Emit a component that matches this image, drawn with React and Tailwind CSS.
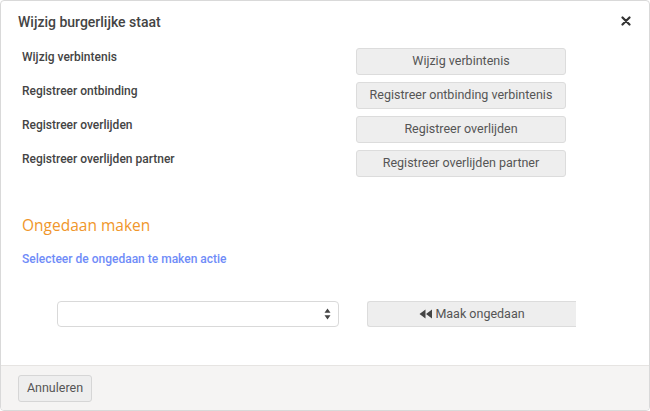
import React from "react";

const rows = [
  ["Wijzig verbintenis", "Wijzig verbintenis"],
  ["Registreer ontbinding", "Registreer ontbinding verbintenis"],
  ["Registreer overlijden", "Registreer overlijden"],
  ["Registreer overlijden partner", "Registreer overlijden partner"],
];

export default function App() {
  return (
    <div className="w-[650px] h-[411px] bg-white" style={{ fontFamily: "Roboto, 'Liberation Sans', sans-serif" }}>
      <div className="w-[650px] h-[411px] border border-[#d9d9d9] rounded-[4px] flex flex-col overflow-hidden">
        <div className="flex-1 flex flex-col">
          <div className="flex items-center justify-between pl-[17px] pr-[18px] h-[43px]">
            <div className="text-[14px] text-[#444] font-medium">Wijzig burgerlijke staat</div>
            <svg width="10" height="10" viewBox="0 0 10 10" className="mt-[-4px]">
              <path d="M1.5 1.5 L8.5 8.5 M8.5 1.5 L1.5 8.5" stroke="#333" strokeWidth="2.2" strokeLinecap="round" />
            </svg>
          </div>
          <div className="flex flex-col gap-[7px] mt-[4px]">
            {rows.map(([l, b]) => (
              <div key={l} className="flex items-start h-[27px]">
                <div className="w-[355px] pl-[21px] text-[12px] font-medium text-[#444] leading-[14px] pt-[2px]">{l}</div>
                <button className="w-[210px] h-[27px] bg-[#eeeeee] border border-[#dcdcdc] rounded-[3px] text-[12.5px] text-[#555] leading-none">
                  {b}
                </button>
              </div>
            ))}
          </div>
          <div className="pl-[21px] mt-[39px] text-[15.5px] text-[#f0962a] leading-[18px]" style={{ fontFamily: "'Open Sans', sans-serif" }}>
            Ongedaan maken
          </div>
          <div className="pl-[21px] mt-[18px] text-[12px] font-medium text-[#6f8cf8] leading-[14px]">
            Selecteer de ongedaan te maken actie
          </div>
          <div className="flex items-center mt-[35px] pl-[56px]">
            <div className="w-[282px] h-[26px] border border-[#d9d9d9] rounded-[4px] flex items-center justify-end pr-[7px]">
              <svg width="7" height="12" viewBox="0 0 7 12">
                <path d="M3.5 0.5 L6.5 4.8 H0.5 Z M3.5 11.5 L6.5 7.2 H0.5 Z" fill="#444" />
              </svg>
            </div>
            <button className="ml-[28px] w-[209px] h-[26px] bg-[#eeeeee] border border-[#dcdcdc] border-r-0 rounded-l-[3px] text-[12.5px] text-[#555] flex items-center justify-center gap-[2px]">
              <svg width="14" height="10" viewBox="0 0 14 10">
                <path d="M6.5 0.5 L0.5 5 L6.5 9.5 Z M13 0.5 L7 5 L13 9.5 Z" fill="#444" />
              </svg>
              <span>Maak ongedaan</span>
            </button>
          </div>
        </div>
        <div className="h-[45px] bg-[#f5f4f3] border-t border-[#e6e4e2] flex items-center pl-[17px]">
          <button className="w-[74px] h-[27px] bg-[#eeeeee] border border-[#d6d6d6] rounded-[3px] text-[12.5px] text-[#555]">
            Annuleren
          </button>
        </div>
      </div>
    </div>
  );
}
